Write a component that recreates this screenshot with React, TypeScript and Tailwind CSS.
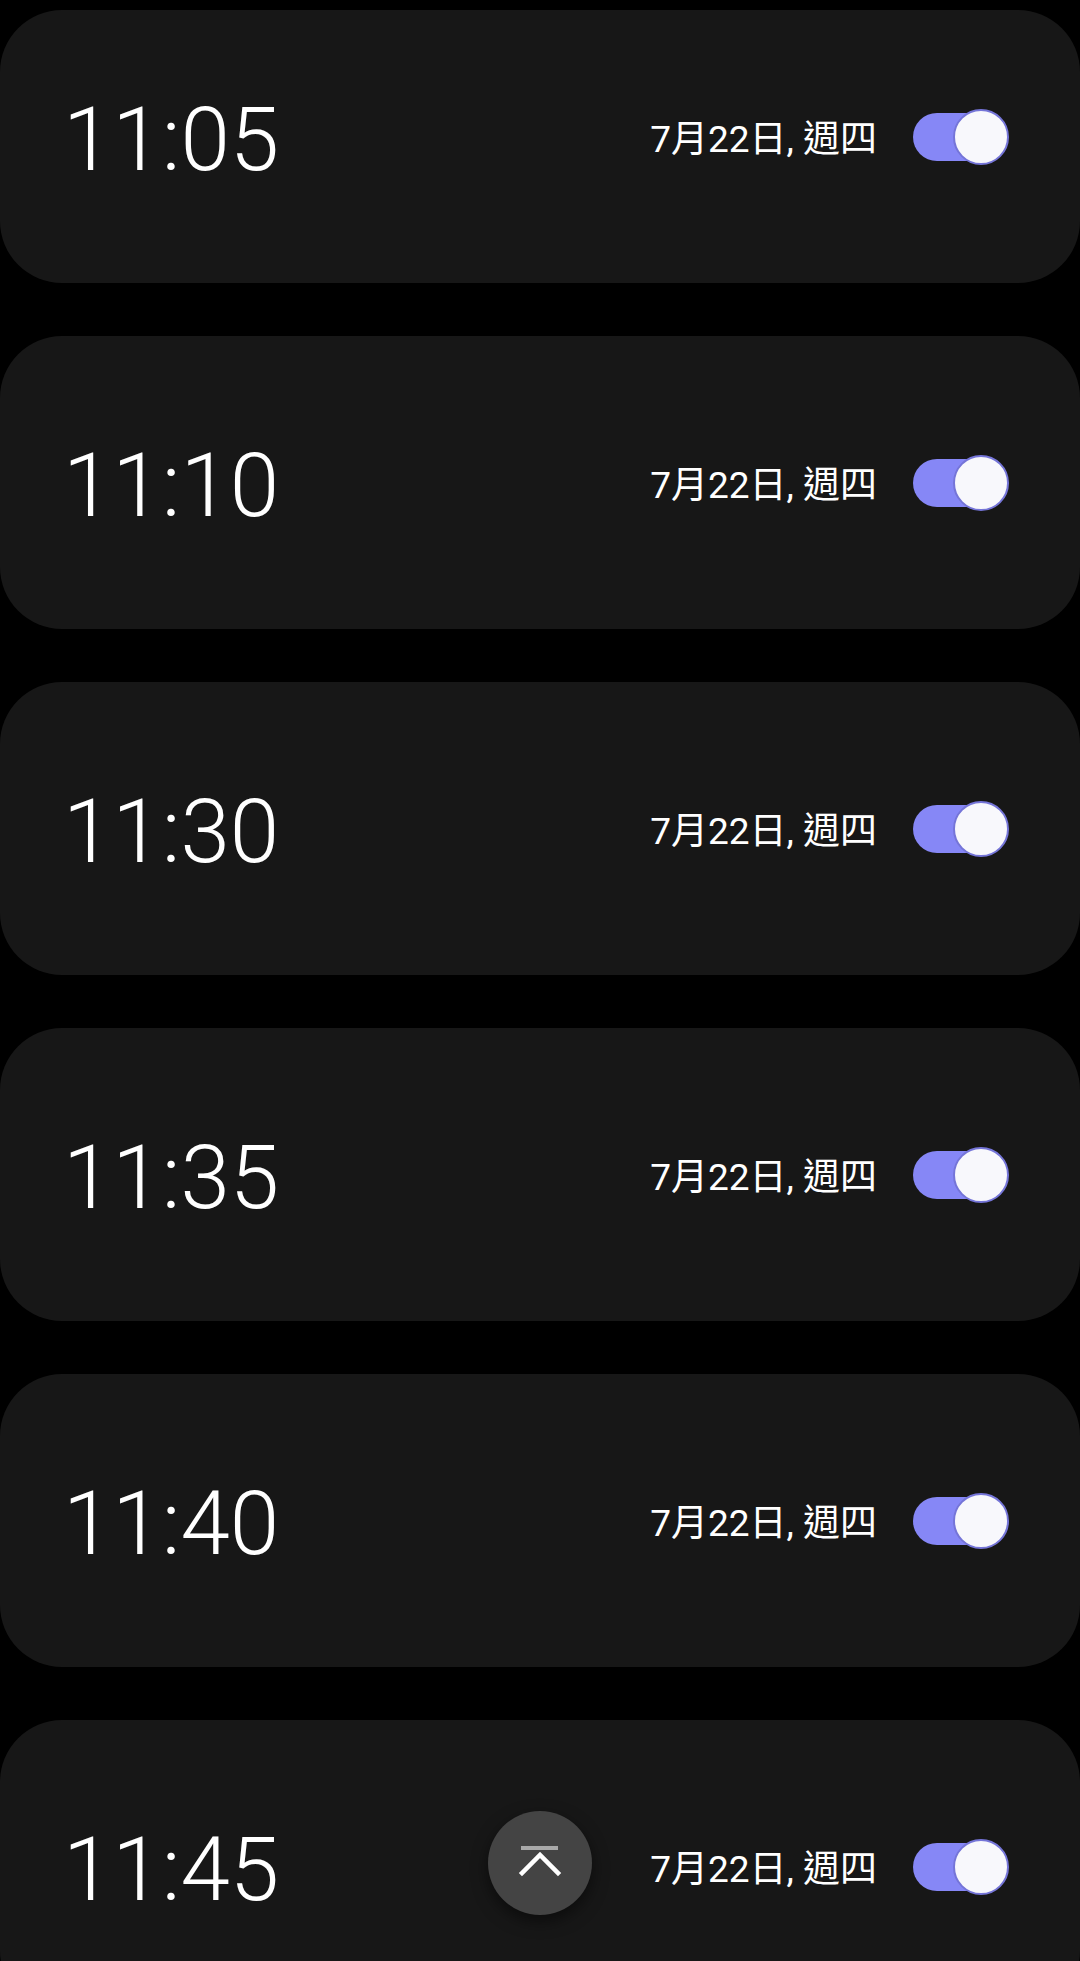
import { useState } from 'react';

type Alarm = { time: string; date: string; on: boolean };

const alarms: Alarm[] = [
  { time: '11:05', date: '7月22日, 週四', on: true },
  { time: '11:10', date: '7月22日, 週四', on: true },
  { time: '11:30', date: '7月22日, 週四', on: true },
  { time: '11:35', date: '7月22日, 週四', on: true },
  { time: '11:40', date: '7月22日, 週四', on: true },
  { time: '11:45', date: '7月22日, 週四', on: true },
];

function Toggle({ on, onClick }: { on: boolean; onClick: () => void }) {
  return (
    <button onClick={onClick} className="relative flex items-center w-[96px] h-[58px] shrink-0">
      <span className={`block h-[48px] w-[88px] rounded-full ${on ? 'bg-[#8687f6]' : 'bg-[#555]'}`} />
      <span
        className={`absolute top-[1px] h-[56px] w-[56px] rounded-full border-2 border-[#7575d8] bg-[#f8f8fc] ${on ? 'right-0' : 'left-0'}`}
      />
    </button>
  );
}

function AlarmCard({ alarm, first, onToggle }: { alarm: Alarm; first: boolean; onToggle: () => void }) {
  return (
    <div
      className={`flex items-center justify-between rounded-[62px] bg-[#171717] pl-[63px] pr-[71px] ${
        first ? 'h-[273px] pb-[20px]' : 'h-[293px]'
      }`}
    >
      <span className="mt-[6px] text-[89px] font-light leading-none text-white" style={{ fontFamily: 'Roboto, sans-serif' }}>
        {alarm.time}
      </span>
      <div className="flex items-center gap-[36px]">
        <span
          className="mt-[5px] text-[37px] leading-none text-white"
          style={{ fontFamily: 'Roboto, "Noto Sans CJK TC", sans-serif' }}
        >
          {alarm.date}
        </span>
        <Toggle on={alarm.on} onClick={onToggle} />
      </div>
    </div>
  );
}

export default function App() {
  const [items, setItems] = useState(alarms);

  const toggle = (i: number) =>
    setItems((prev) => prev.map((a, idx) => (idx === i ? { ...a, on: !a.on } : a)));

  return (
    <div className="relative h-[1961px] w-[1080px] overflow-hidden bg-black">
      <div className="flex flex-col gap-[53px] pt-[10px]">
        {items.map((a, i) => (
          <AlarmCard key={a.time} alarm={a} first={i === 0} onToggle={() => toggle(i)} />
        ))}
      </div>

      {/* scroll to top */}
      <button className="absolute left-[488px] top-[1811px] flex h-[104px] w-[104px] items-center justify-center rounded-full bg-[#444444] shadow-[0_6px_16px_rgba(0,0,0,0.5)]">
        <svg width="44" height="34" viewBox="0 0 44 34" fill="none">
          <line x1="3" y1="2" x2="40" y2="2" stroke="#a9a9a9" strokeWidth="4" />
          <polyline points="4,27 22,9 40,27" stroke="#ffffff" strokeWidth="4.5" fill="none" strokeLinecap="square" />
        </svg>
      </button>
    </div>
  );
}
